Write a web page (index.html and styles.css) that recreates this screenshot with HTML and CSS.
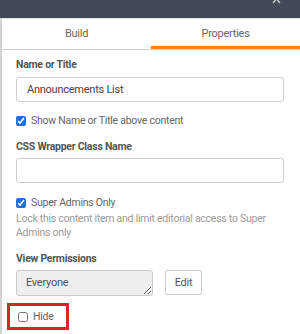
FILE: index.html
```html
<!DOCTYPE html>
<html>
<head>
  <title>Properties</title>
  <link rel="stylesheet" href="styles.css">
</head>
<body>
  <div class="topbar">
    <svg class="close-icon" width="12" height="6" viewBox="0 0 12 6">
      <path d="M1 -5 L8 3 M8 -5 L1 3" stroke="#c9ccd3" stroke-width="1.3" fill="none"/>
    </svg>
  </div>

  <div class="panel">
    <div class="tabs">
      <div class="tab">Build</div>
      <div class="tab active">Properties</div>
    </div>

    <div class="content">
      <label class="field-label">Name or Title</label>
      <input class="text-input" type="text" value="Announcements List">

      <label class="check-row row-first">
        <input type="checkbox" checked>
        <span>Show Name or Title above content</span>
      </label>

      <label class="field-label label-gap">CSS Wrapper Class Name</label>
      <input class="text-input input-tight" type="text">

      <label class="check-row row-admins">
        <input type="checkbox" checked>
        <span>Super Admins Only</span>
      </label>
      <p class="hint">Lock this content item and limit editorial access to Super Admins only</p>

      <label class="field-label label-gap">View Permissions</label>
      <div class="perm-row">
        <textarea class="perm-box" readonly>Everyone</textarea>
        <button class="edit-btn">Edit</button>
      </div>

      <div class="hide-box">
        <label class="check-row">
          <input type="checkbox">
          <span>Hide</span>
        </label>
      </div>
    </div>
  </div>
</body>
</html>
```

FILE: styles.css
```css
body {
  margin: 0;
  font-family: Roboto, "Liberation Sans", sans-serif;
  font-size: 10.5px;
  letter-spacing: -0.25px;
  color: #555;
  background: #fff;
  overflow: hidden;
}

/* Тёмная полоса сверху */
.topbar {
  height: 18px;
  background-color: #434957;
  position: relative;
}

.close-icon {
  position: absolute;
  top: 0;
  right: 16px;
}

/* Панель */
.panel {
  border-left: 2px solid #d4d4d4;
  border-top: 1px solid #e2e2e2;
  height: 316px;
}

.tabs {
  display: flex;
  border-bottom: 1px solid #d0d0d0;
}

.tab {
  flex: 1;
  height: 30px;
  line-height: 30px;
  text-align: center;
  font-size: 11px;
  color: #666;
  border-bottom: 3px solid transparent;
  box-sizing: border-box;
}

.tab.active {
  border-bottom-color: #f5832a;
}

.content {
  padding: 8px 16px 0 14px;
}

.field-label {
  display: block;
  font-weight: bold;
  line-height: 14px;
  color: #555;
}

.label-gap {
  margin-top: 12px;
}

.text-input {
  display: block;
  width: 100%;
  height: 25px;
  margin-top: 5px;
  box-sizing: border-box;
  border: 1px solid #cfcfcf;
  border-radius: 3px;
  padding: 0 10px;
  font-family: inherit;
  font-size: 11px;
  letter-spacing: -0.25px;
  color: #444;
  outline: none;
}

.input-tight {
  margin-top: 4px;
}

.check-row {
  display: flex;
  align-items: center;
  gap: 5px;
  line-height: 14px;
  color: #666;
}

.check-row input {
  width: 10px;
  height: 10px;
  margin: 0;
  accent-color: #1f6fd8;
}

.row-first {
  margin-top: 12px;
}

.row-admins {
  margin-top: 13px;
}

.hint {
  margin: 2px 0 0;
  line-height: 14px;
  color: #9a9a9a;
}

.perm-row {
  display: flex;
  align-items: flex-start;
  gap: 12px;
  margin-top: 4px;
}

.perm-box {
  width: 137px;
  height: 26px;
  box-sizing: border-box;
  background: #eeeeee;
  border: 1px solid #cacaca;
  border-radius: 3px;
  padding: 5px 9px;
  font-family: inherit;
  font-size: 11px;
  letter-spacing: -0.25px;
  color: #555;
  overflow: hidden;
  outline: none;
}

.edit-btn {
  height: 25px;
  width: 37px;
  background: #fff;
  border: 1px solid #cccccc;
  border-radius: 2px;
  font-family: inherit;
  font-size: 11px;
  letter-spacing: -0.25px;
  color: #555;
  padding: 0;
}

/* Красная рамка вокруг Hide */
.hide-box {
  margin: 7px 0 0 -9px;
  width: 62px;
  height: 27px;
  box-sizing: border-box;
  border: 3px solid #e3202a;
  padding-left: 8px;
  display: flex;
  align-items: center;
}
```
